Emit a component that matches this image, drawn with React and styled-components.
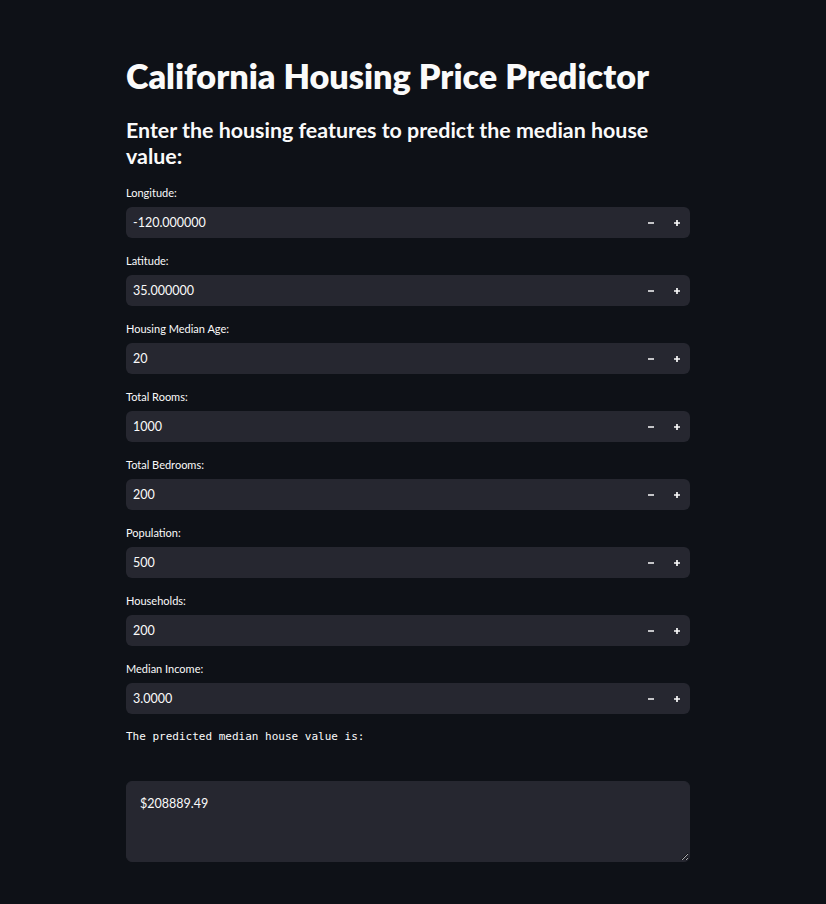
import React from "react";
import styled, { createGlobalStyle } from "styled-components";

const fields = [
  { id: "lon", label: "Longitude:", value: "-120.000000" },
  { id: "lat", label: "Latitude:", value: "35.000000" },
  { id: "age", label: "Housing Median Age:", value: "20" },
  { id: "rooms", label: "Total Rooms:", value: "1000" },
  { id: "beds", label: "Total Bedrooms:", value: "200" },
  { id: "pop", label: "Population:", value: "500" },
  { id: "house", label: "Households:", value: "200" },
  { id: "income", label: "Median Income:", value: "3.0000" },
];

const MinusIcon = () => (
  <svg width="8" height="8" viewBox="0 0 8 8">
    <path d="M1 4H7" stroke="#fafafa" strokeWidth="1.7" />
  </svg>
);

const PlusIcon = () => (
  <svg width="8" height="8" viewBox="0 0 8 8">
    <path d="M1 4H7M4 1V7" stroke="#fafafa" strokeWidth="1.7" />
  </svg>
);

const App = () => {
  return (
    <Page>
      <GlobalStyle />
      <Main>
        <Title>California Housing Price Predictor</Title>
        <Subtitle>
          Enter the housing features to predict the median house value:
        </Subtitle>
        <Form>
          {fields.map((f) => (
            <Field key={f.id}>
              <Label htmlFor={f.id}>{f.label}</Label>
              <InputWrap>
                <Input id={f.id} defaultValue={f.value} />
                <StepButton aria-label="decrement">
                  <MinusIcon />
                </StepButton>
                <StepButton aria-label="increment">
                  <PlusIcon />
                </StepButton>
              </InputWrap>
            </Field>
          ))}
          <Mono>The predicted median house value is:</Mono>
          <ResultArea readOnly defaultValue="$208889.49" />
        </Form>
      </Main>
    </Page>
  );
};

export default App;

const GlobalStyle = createGlobalStyle`
  html, body {
    margin: 0;
    background: #0e1117;
    color-scheme: dark;
  }
  * {
    box-sizing: border-box;
  }
`;

const Page = styled.div`
  min-height: 100vh;
  background: #0e1117;
  padding-right: 10px;
  font-family: Lato, "Noto Sans", sans-serif;
  color: #fafafa;
`;

const Main = styled.div`
  width: 564px;
  margin: 0 auto;
  padding-top: 55px;
  padding-bottom: 40px;
`;

const Title = styled.h1`
  margin: 0;
  font-size: 34.2px;
  line-height: 41px;
  font-weight: 800;
  color: #fafafa;
`;

const Subtitle = styled.h3`
  margin: 21px 0 0;
  font-size: 21.4px;
  line-height: 26px;
  font-weight: 700;
  color: #fafafa;
`;

const Form = styled.div`
  display: flex;
  flex-direction: column;
  gap: 13px;
  margin-top: 14px;
`;

const Field = styled.div`
  display: flex;
  flex-direction: column;
`;

const Label = styled.label`
  height: 19px;
  line-height: 19px;
  font-size: 11px;
  color: #fafafa;
  margin-bottom: 5px;
`;

const InputWrap = styled.div`
  display: flex;
  align-items: stretch;
  height: 31px;
  background: #262730;
  border-radius: 6px;
  overflow: hidden;
`;

const Input = styled.input`
  flex: 1;
  min-width: 0;
  border: none;
  outline: none;
  background: transparent;
  color: #fafafa;
  font-family: Lato, "Noto Sans", sans-serif;
  font-size: 12.5px;
  padding: 0 7px;
`;

const StepButton = styled.button`
  width: 26px;
  border: none;
  background: transparent;
  padding: 0;
  display: flex;
  align-items: center;
  justify-content: center;
  cursor: pointer;
`;

const Mono = styled.div`
  font-family: "DejaVu Sans Mono", "Liberation Mono", monospace;
  font-size: 11px;
  line-height: 20px;
  color: #fafafa;
  margin-bottom: 21px;
`;

const ResultArea = styled.textarea`
  display: block;
  width: 100%;
  height: 81px;
  resize: vertical;
  background: #262730;
  border: 1px solid #262730;
  border-radius: 6px;
  color: #fafafa;
  font-family: Lato, "Noto Sans", sans-serif;
  font-size: 12.5px;
  line-height: 1.6;
  padding: 12px 13px;
  outline: none;
`;
